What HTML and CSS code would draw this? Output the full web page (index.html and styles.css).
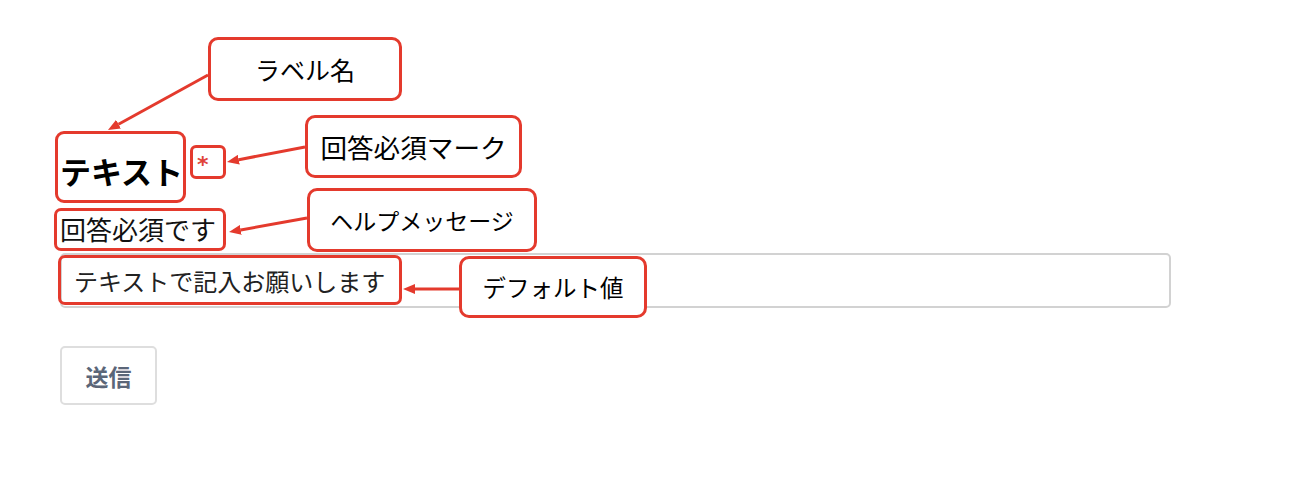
FILE: index.html
```html
<!DOCTYPE html>
<html lang="ja">
<head>
<meta charset="utf-8">
<title>フォーム説明</title>
<link rel="stylesheet" href="styles.css">
</head>
<body>
<div class="page">
  <form class="form">
    <div class="field">
      <div class="label-row"><span class="label">テキスト</span><span class="req">*</span></div>
      <div class="help">回答必須です</div>
      <input class="text-input" type="text" value="テキストで記入お願いします">
    </div>
    <button class="submit" type="button">送信</button>
  </form>

  <svg class="arrows" width="1300" height="502" viewBox="0 0 1300 502">
    <defs>
      <marker id="head" markerUnits="userSpaceOnUse" markerWidth="12" markerHeight="10" refX="0" refY="5" orient="auto">
        <path d="M0,0 L12,5 L0,10 z" fill="#e43a2d"/>
      </marker>
    </defs>
    <line x1="208" y1="75" x2="118.5" y2="124.2" marker-end="url(#head)"/>
    <line x1="305" y1="147" x2="238.8" y2="159.7" marker-end="url(#head)"/>
    <line x1="307" y1="218" x2="240.8" y2="229.9" marker-end="url(#head)"/>
    <line x1="459" y1="289" x2="415" y2="289" marker-end="url(#head)"/>
  </svg>

  <div class="hl hl-label"></div>
  <div class="hl hl-req"></div>
  <div class="hl hl-help"></div>
  <div class="hl hl-value"></div>

  <div class="note note-label">ラベル名</div>
  <div class="note note-req">回答必須マーク</div>
  <div class="note note-help">ヘルプメッセージ</div>
  <div class="note note-value">デフォルト値</div>
</div>
</body>
</html>
```

FILE: styles.css
```css
* { box-sizing: border-box; }

html, body {
  margin: 0;
  padding: 0;
  background: #ffffff;
}

body {
  font-family: "Noto Sans CJK JP", "Noto Sans", sans-serif;
  color: #111;
}

.page {
  position: relative;
  width: 1300px;
  height: 502px;
  overflow: hidden;
}

.form {
  padding: 148px 0 0 60px;
}

.field {
  display: flex;
  flex-direction: column;
  align-items: flex-start;
}

.label-row {
  display: flex;
  align-items: flex-start;
  height: 46px;
}

.label {
  font-size: 31px;
  font-weight: 700;
  line-height: 46px;
  color: #000;
}

.req {
  margin-left: 14px;
  margin-top: 5px;
  font-family: "DejaVu Sans", sans-serif;
  font-size: 22px;
  font-weight: 700;
  line-height: 24px;
  color: #e0443a;
}

.help {
  margin-top: 17px;
  font-size: 26px;
  line-height: 36px;
  color: #111;
}

.text-input {
  margin-top: 6px;
  width: 1111px;
  height: 55px;
  border: 2px solid #d2d2d2;
  border-radius: 5px;
  padding: 0 12px;
  font-family: "Noto Sans CJK JP", "Noto Sans", sans-serif;
  font-size: 24px;
  color: #222;
  background: #fff;
  outline: none;
}

.submit {
  display: block;
  margin-top: 38px;
  width: 97px;
  height: 59px;
  border: 2px solid #dedede;
  border-radius: 5px;
  background: #fff;
  font-family: "Noto Sans CJK JP", "Noto Sans", sans-serif;
  font-size: 23px;
  font-weight: 700;
  color: #5b6678;
  padding: 0;
}

.arrows {
  position: absolute;
  left: 0;
  top: 0;
  pointer-events: none;
}

.arrows line {
  stroke: #e43a2d;
  stroke-width: 3;
}

.hl {
  position: absolute;
  border: 3px solid #e43a2d;
  border-radius: 9px;
}

.hl-label { left: 55px; top: 131px; width: 131px; height: 72px; }
.hl-req { left: 190px; top: 145px; width: 36px; height: 34px; border-radius: 6px; }
.hl-help { left: 54px; top: 208px; width: 172px; height: 43px; border-radius: 7px; }
.hl-value { left: 58px; top: 255px; width: 344px; height: 50px; border-radius: 7px; }

.note {
  position: absolute;
  display: flex;
  align-items: center;
  justify-content: center;
  border: 3px solid #e43a2d;
  border-radius: 10px;
  background: #fff;
  font-size: 26px;
  color: #000;
  white-space: nowrap;
}

.note-label { left: 208px; top: 37px; width: 194px; height: 64px; font-size: 25px; }
.note-req { left: 305px; top: 115px; width: 217px; height: 63px; font-size: 26.6px; }
.note-help { left: 307px; top: 188px; width: 230px; height: 64px; font-size: 23px; }
.note-value { left: 459px; top: 256px; width: 188px; height: 62px; font-size: 23.5px; }
```
